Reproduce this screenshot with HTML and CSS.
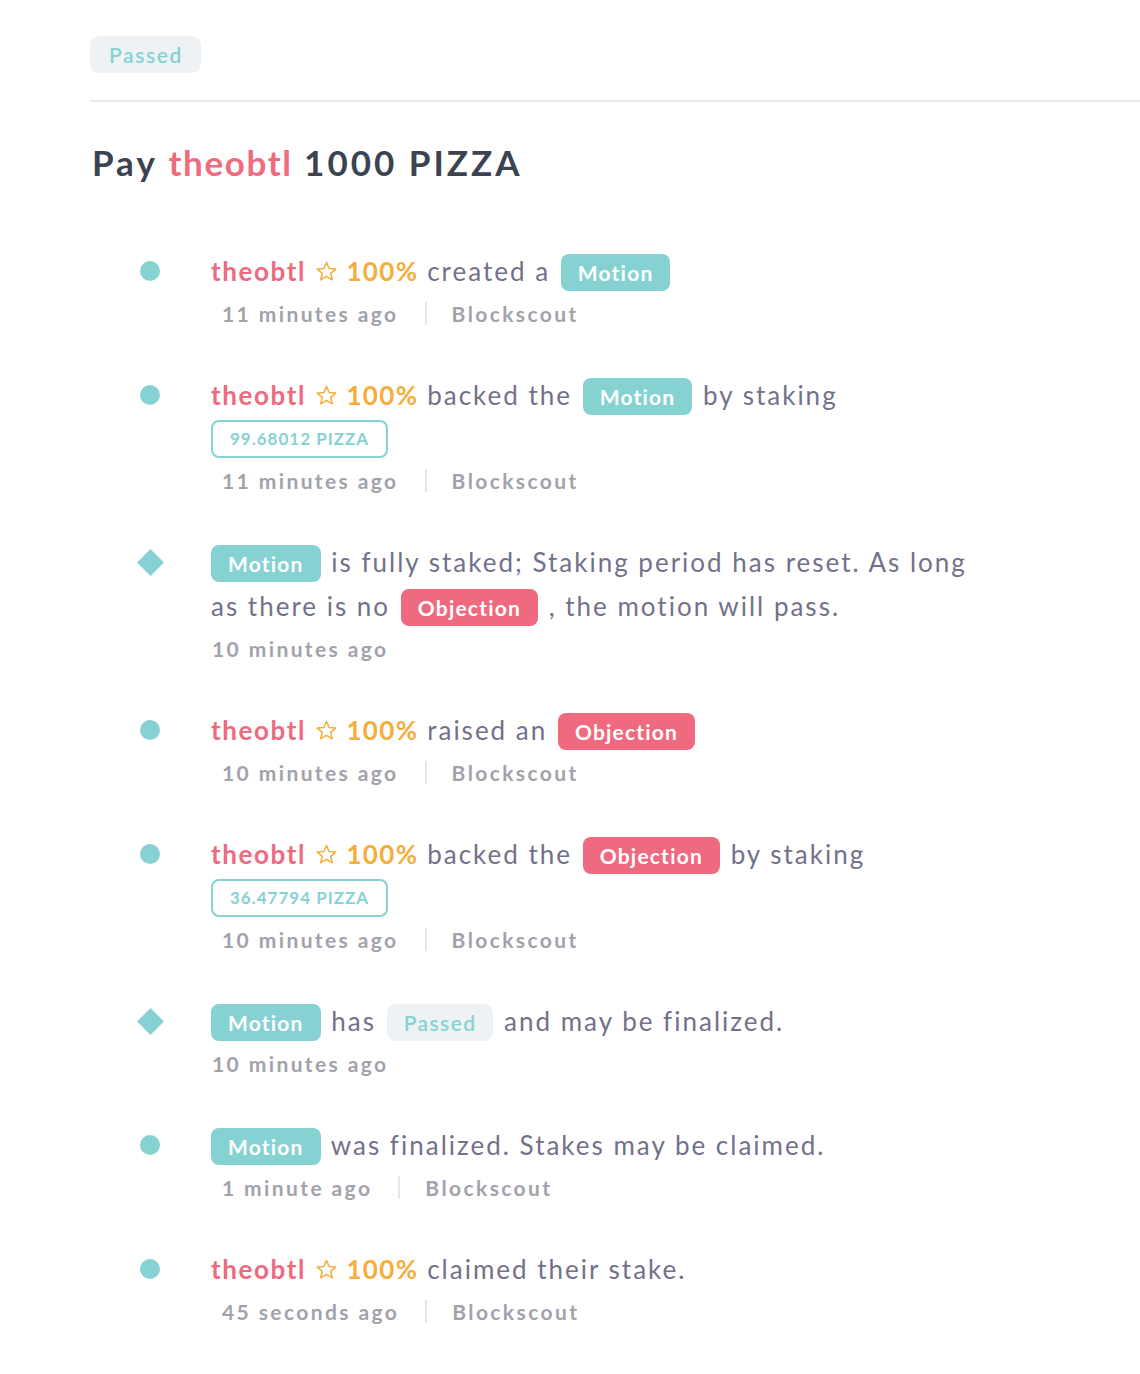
FILE: index.html
```html
<!DOCTYPE html>
<html>
<head>
<meta charset="utf-8">
<link rel="stylesheet" href="styles.css">
</head>
<body>
<div class="page">
  <span class="tag-passed tag-top">Passed</span>
  <div class="rule"></div>
  <h1 class="title">Pay <span class="name">theobtl</span> 1000 PIZZA</h1>

  <div class="timeline">
    <div class="item">
      <div class="marker"><span class="dot"></span></div>
      <div class="content">
        <div class="line"><span class="name">theobtl</span> <svg class="star" viewBox="0 0 24 24"><path d="M12 2.6l2.75 6.3 6.85.55-5.2 4.5 1.6 6.7L12 17.1l-5.99 3.55 1.6-6.7-5.2-4.5 6.85-.55z"/></svg> <span class="rep">100%</span> created a <span class="badge teal">Motion</span></div>
        <div class="meta"><span>11 minutes ago</span><span class="sep"></span><span>Blockscout</span></div>
      </div>
    </div>

    <div class="item">
      <div class="marker"><span class="dot"></span></div>
      <div class="content">
        <div class="line"><span class="name">theobtl</span> <svg class="star" viewBox="0 0 24 24"><path d="M12 2.6l2.75 6.3 6.85.55-5.2 4.5 1.6 6.7L12 17.1l-5.99 3.55 1.6-6.7-5.2-4.5 6.85-.55z"/></svg> <span class="rep">100%</span> backed the <span class="badge teal">Motion</span> by staking</div>
        <div class="amount-row"><span class="amount">99.68012 PIZZA</span></div>
        <div class="meta"><span>11 minutes ago</span><span class="sep"></span><span>Blockscout</span></div>
      </div>
    </div>

    <div class="item">
      <div class="marker"><span class="diamond"></span></div>
      <div class="content">
        <div class="line"><span class="badge teal first">Motion</span> is fully staked; Staking period has reset. As long as there is no <span class="badge pink">Objection</span> , the motion will pass.</div>
        <div class="meta plain"><span>10 minutes ago</span></div>
      </div>
    </div>

    <div class="item">
      <div class="marker"><span class="dot"></span></div>
      <div class="content">
        <div class="line"><span class="name">theobtl</span> <svg class="star" viewBox="0 0 24 24"><path d="M12 2.6l2.75 6.3 6.85.55-5.2 4.5 1.6 6.7L12 17.1l-5.99 3.55 1.6-6.7-5.2-4.5 6.85-.55z"/></svg> <span class="rep">100%</span> raised an <span class="badge pink">Objection</span></div>
        <div class="meta"><span>10 minutes ago</span><span class="sep"></span><span>Blockscout</span></div>
      </div>
    </div>

    <div class="item">
      <div class="marker"><span class="dot"></span></div>
      <div class="content">
        <div class="line"><span class="name">theobtl</span> <svg class="star" viewBox="0 0 24 24"><path d="M12 2.6l2.75 6.3 6.85.55-5.2 4.5 1.6 6.7L12 17.1l-5.99 3.55 1.6-6.7-5.2-4.5 6.85-.55z"/></svg> <span class="rep">100%</span> backed the <span class="badge pink">Objection</span> by staking</div>
        <div class="amount-row"><span class="amount">36.47794 PIZZA</span></div>
        <div class="meta"><span>10 minutes ago</span><span class="sep"></span><span>Blockscout</span></div>
      </div>
    </div>

    <div class="item">
      <div class="marker"><span class="diamond"></span></div>
      <div class="content">
        <div class="line"><span class="badge teal first">Motion</span> has <span class="tag-passed">Passed</span> and may be finalized.</div>
        <div class="meta plain"><span>10 minutes ago</span></div>
      </div>
    </div>

    <div class="item">
      <div class="marker"><span class="dot"></span></div>
      <div class="content">
        <div class="line"><span class="badge teal first">Motion</span> was finalized. Stakes may be claimed.</div>
        <div class="meta"><span>1 minute ago</span><span class="sep"></span><span>Blockscout</span></div>
      </div>
    </div>

    <div class="item">
      <div class="marker"><span class="dot"></span></div>
      <div class="content">
        <div class="line"><span class="name">theobtl</span> <svg class="star" viewBox="0 0 24 24"><path d="M12 2.6l2.75 6.3 6.85.55-5.2 4.5 1.6 6.7L12 17.1l-5.99 3.55 1.6-6.7-5.2-4.5 6.85-.55z"/></svg> <span class="rep">100%</span> claimed their stake.</div>
        <div class="meta"><span>45 seconds ago</span><span class="sep"></span><span>Blockscout</span></div>
      </div>
    </div>
  </div>
</div>
</body>
</html>
```

FILE: styles.css
```css
html, body {
  margin: 0;
  padding: 0;
  background: #ffffff;
}

body {
  font-family: "Lato", "Noto Sans", sans-serif;
  color: #73718a;
}

.page {
  padding: 36px 0 0 90px;
}

.tag-passed {
  display: inline-block;
  height: 37px;
  line-height: 37px;
  padding: 0 18px 0 19px;
  border-radius: 9px;
  background: #eef2f5;
  color: #86d2d2;
  font-size: 21px;
  font-weight: 600;
  letter-spacing: 1.6px;
  vertical-align: middle;
  box-sizing: border-box;
}

.tag-top {
  vertical-align: top;
}

.rule {
  height: 2px;
  background: #e9eaed;
  margin-top: 27px;
}

.title {
  margin: 38px 0 0 2px;
  font-size: 35px;
  line-height: 44px;
  font-weight: 700;
  color: #3c4350;
  letter-spacing: 3px;
}

.title .name {
  color: #ef6b7f;
  font-weight: 700;
}

.timeline {
  margin-top: 65px;
  padding-left: 40px;
}

.item {
  display: flex;
  margin-bottom: 40px;
}

.marker {
  width: 40px;
  height: 44px;
  flex: none;
  display: flex;
  align-items: center;
  justify-content: center;
  margin-right: 41px;
}

.dot {
  width: 20px;
  height: 20px;
  border-radius: 50%;
  background: #86d2d2;
}

.diamond {
  width: 19px;
  height: 19px;
  background: #86d2d2;
  transform: rotate(45deg);
}

.content {
  flex: 1;
  max-width: 775px;
}

.line {
  font-size: 26px;
  line-height: 44px;
  letter-spacing: 2px;
  color: #73718a;
}

.name {
  color: #ee6a7e;
  font-weight: 700;
  letter-spacing: 1.6px;
}

.rep {
  color: #f5ad3c;
  font-weight: 700;
  letter-spacing: 1.4px;
}

.star {
  width: 23px;
  height: 23px;
  vertical-align: -2px;
  fill: none;
  stroke: #f5ad3c;
  stroke-width: 1.6;
  stroke-linejoin: round;
}

.badge {
  display: inline-block;
  height: 37px;
  line-height: 37px;
  padding: 0 17px;
  border-radius: 8px;
  color: #ffffff;
  font-size: 21px;
  font-weight: 700;
  letter-spacing: 1.2px;
  vertical-align: middle;
  margin: 0 2px;
  position: relative;
  top: -2px;
}

.badge.first {
  margin-left: 0;
}

.badge.teal {
  background: #86d2d3;
}

.badge.pink {
  background: #ef6a7e;
}

.line .tag-passed {
  margin: 0 2px;
  padding: 0 17px;
  letter-spacing: 1.4px;
  position: relative;
  top: -2px;
}

.amount-row {
  margin: 3px 0 2px;
  height: 38px;
}

.amount {
  display: inline-block;
  height: 38px;
  line-height: 34px;
  box-sizing: border-box;
  padding: 0 17px;
  border: 2px solid #86d2d2;
  border-radius: 8px;
  color: #86d2d2;
  font-size: 17px;
  font-weight: 700;
  letter-spacing: 1px;
}

.meta {
  display: flex;
  align-items: center;
  height: 40px;
  padding-left: 11px;
  font-size: 21px;
  font-weight: 700;
  letter-spacing: 2.4px;
  color: #a2a2aa;
}

.meta.plain {
  padding-left: 1px;
}

.sep {
  width: 2px;
  height: 23px;
  background: #e6e6eb;
  margin: 0 25px 0 26px;
}
```
